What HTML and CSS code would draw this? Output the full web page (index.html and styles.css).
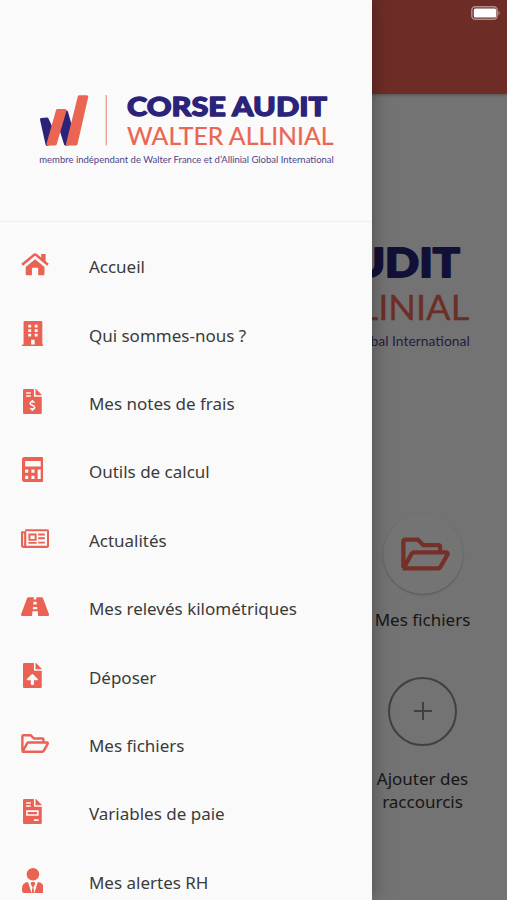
FILE: index.html
```html
<!DOCTYPE html>
<html lang="fr">
<head>
<meta charset="utf-8">
<title>Corse Audit</title>
<link rel="stylesheet" href="styles.css">
</head>
<body>
<svg class="defs" aria-hidden="true">
  <symbol id="logo" viewBox="39 94 295 73" overflow="visible">
    <g stroke-linejoin="round" stroke-width="3">
      <path fill="#2b2379" stroke="#2b2379" d="M41.500 119.500l5.500-.5 6 13-5 12.200h-1zM64.500 111l2 1 5.500 20-4 12h-2.500l-5-16z"/>
      <path fill="#ea6653" stroke="#ea6653" d="M57.500 110.500h7.500L55.200 144H48zM79.300 96.700h7.500L76 144h-8.500z"/>
    </g>
    <path d="M106.300 95v50.500" stroke="#e79d91" stroke-width="1.300"/>
    <text class="brand" x="127" y="115.500" textLength="200" lengthAdjust="spacingAndGlyphs">CORSE AUDIT</text>
    <text class="group" x="127" y="145.400" textLength="206.500" lengthAdjust="spacingAndGlyphs">WALTER ALLINIAL</text>
    <text class="tagline" x="39.300" y="163.200" textLength="294.500" lengthAdjust="spacingAndGlyphs">membre indépendant de Walter France et d’Allinial Global International</text>
  </symbol>
  <symbol id="folder" viewBox="0 0 576 512">
    <path fill="none" stroke="currentColor" stroke-width="50" stroke-linejoin="round" d="M28 420V112q0-24 24-24h148l64 64h172q24 0 24 24v56M28 420q4 4 12 4h400q14 0 22-12l82-144q12-30-12-32H152q-16 0-24 12L34 416"/>
  </symbol>
</svg>

<div class="screen">
  <main class="app">
    <header class="topbar"></header>
    <svg class="home-logo"><use href="#logo"/></svg>
    <section class="shortcuts">
      <div class="shortcut">
        <span class="disc"><svg class="disc-icon"><use href="#folder"/></svg></span>
        <span>Mes fichiers</span>
      </div>
      <div class="shortcut">
        <span class="add"><svg viewBox="0 0 18 18" width="18" height="18"><path d="M9 0v18M0 9h18" stroke="currentColor" stroke-width="2"/></svg></span>
        <span>Ajouter des raccourcis</span>
      </div>
    </section>
  </main>
  <div class="scrim"></div>
  <svg class="battery" viewBox="0 0 30 14"><rect x=".8" y=".8" width="25.400" height="12.400" rx="3.500"/><rect class="charge" x="2.800" y="2.500" width="22.400" height="9" rx="1.500"/><path class="tip" d="M27.500 4.500q2.500 2.500 0 5z"/></svg>

  <aside class="drawer">
    <div class="drawer-head"><svg class="drawer-logo"><use href="#logo"/></svg></div>
    <nav class="menu">
      <a class="item"><span class="icon"><svg viewBox="0 0 576 512"><path d="M288 150l192 158v148q0 20-20 20H352V340q0-16-16-16h-96q-16 0-16 16v136H116q-20 0-20-20V308z"/><path d="M24 262L270 58q18-14 36 0l246 204" fill="none" stroke="currentColor" stroke-width="52" stroke-linejoin="round"/><path d="M414 40h78q12 0 12 12v168l-90-72z"/></svg></span><span>Accueil</span></a>
      <a class="item"><span class="icon"><svg viewBox="0 0 448 512"><path fill-rule="evenodd" d="M56 0h336q24 0 24 24v456h20q12 0 12 12v20H0v-20q0-12 12-12h20V24Q32 0 56 0zM128 76v56h60V76zm132 0v56h60V76zM128 168v56h60v-56zm132 0v56h60v-56zM128 260v56h60v-56zm132 0v56h60v-56zM188 384v96h72v-96z"/></svg></span><span>Qui sommes-nous ?</span></a>
      <a class="item"><span class="icon"><svg viewBox="0 0 384 512"><path d="M24 0h200v136q0 24 24 24h136v328q0 24-24 24H24q-24 0-24-24V24Q0 0 24 0zM256 0q10 0 17 7l104 104q7 7 7 17H256z"/><path class="cut" d="M64 80h96M64 144h96M236 278q-20-18-46-18-42 0-42 36c0 42 90 28 90 78 0 32-24 38-46 38q-26 0-46-18M192 226v34M192 412v36"/></svg></span><span>Mes notes de frais</span></a>
      <a class="item"><span class="icon"><svg viewBox="0 0 448 512"><path fill-rule="evenodd" d="M48 0h352q48 0 48 48v416q0 48-48 48H48q-48 0-48-48V48Q0 0 48 0zM64 80v112h320V80zM64 256v64h64v-64zm128 0v64h64v-64zM64 384v64h64v-64zm128 0v64h64v-64zM320 256v192h64V256z"/></svg></span><span>Outils de calcul</span></a>
      <a class="item"><span class="icon"><svg viewBox="0 0 576 512"><path fill="none" stroke="currentColor" stroke-width="44" stroke-linejoin="round" d="M86 86h444q24 0 24 24v292q0 24-24 24H54q-32 0-32-32V128h64v266q0 32-32 32"/><path fill-rule="evenodd" d="M152 152h168v152H152zm40 40v72h88v-72zM352 152h136v40H352zM352 232h136v40H352zM352 320h136v40H352zM152 328h168v34H152z"/></svg></span><span>Actualités</span></a>
      <a class="item"><span class="icon"><svg viewBox="0 0 576 512"><path fill-rule="evenodd" d="M150 64h114l-4 48h56l-4-48h114q18 0 24 16l124 336q8 32-24 32H350l-8-96H234l-8 96H26q-32 0-24-32L126 80q6-16 24-16zM256 160l-5 56h74l-5-56zM246 264l-4 48h92l-4-48z"/></svg></span><span>Mes relevés kilométriques</span></a>
      <a class="item"><span class="icon"><svg viewBox="0 0 384 512"><path fill-rule="evenodd" d="M24 0h200v136q0 24 24 24h136v328q0 24-24 24H24q-24 0-24-24V24Q0 0 24 0zM256 0q10 0 17 7l104 104q7 7 7 17H256zM180 230L80 330q-8 18 12 22h68v80q0 16 16 16h32q16 0 16-16v-80h68q20-4 12-22L204 230q-12-10-24 0z"/></svg></span><span>Déposer</span></a>
      <a class="item"><span class="icon"><svg viewBox="0 0 576 512"><use href="#folder"/></svg></span><span>Mes fichiers</span></a>
      <a class="item"><span class="icon"><svg viewBox="0 0 384 512"><path d="M24 0h200v136q0 24 24 24h136v328q0 24-24 24H24q-24 0-24-24V24Q0 0 24 0zM256 0q10 0 17 7l104 104q7 7 7 17H256z"/><path class="cut" d="M64 80h96M64 144h96M80 248h224v80H80zM224 432h96"/></svg></span><span>Variables de paie</span></a>
      <a class="item"><span class="icon"><svg viewBox="0 0 448 512"><circle cx="224" cy="128" r="128"/><path d="M130 288l70 190 16-84-32-54q-12-36 12-52h56q24 16 12 52l-32 54 16 84 70-190q130 10 130 134v42q0 48-48 48H48q-48 0-48-48v-42Q0 298 130 288z"/><path class="thin" d="M136 290l64 210M312 290l-64 210"/></svg></span><span>Mes alertes RH</span></a>
    </nav>
  </aside>
</div>
</body>
</html>
```

FILE: styles.css
```css
* { box-sizing: border-box; }
body { margin: 0; font-family: "Noto Sans", "Open Sans", sans-serif; font-size: 17px; color: #3b3b3b; }
.defs { position: absolute; width: 0; height: 0; }
.screen { position: relative; width: 507px; height: 900px; overflow: hidden; }

.brand { font: 900 27px Lato, sans-serif; fill: #2b2379; stroke: #2b2379; stroke-width: 1.300; stroke-linejoin: round; }
.group { font: 400 24.300px Lato, sans-serif; fill: #ea6653; stroke: #ea6653; stroke-width: .2; }
.tagline { font: 400 9.200px Lato, sans-serif; fill: #4e4689; }

.app { display: flex; flex-direction: column; height: 100%; background: #fafafa; }
.topbar { height: 94px; background: #ed6353; box-shadow: 0 1px 3px rgba(0, 0, 0, .3); }
.home-logo { width: 431px; height: 107px; margin: 151px 0 0 38.500px; overflow: visible; }
.shortcuts { display: flex; flex-direction: column; align-items: flex-end; gap: 45px; margin-top: 162px; padding-right: 24.500px; color: #333; line-height: 23.500px; }
.shortcut { display: flex; flex-direction: column; align-items: center; width: 120px; text-align: center; }
.disc { display: flex; align-items: center; justify-content: center; width: 80px; height: 80px; margin-bottom: 14px; border-radius: 50%; background: #fcfcfc; box-shadow: 0 1px 2px rgba(0, 0, 0, .25); color: #ff6a55; }
.disc-icon { width: 49px; height: 44px; margin-left: 5px; }
.add { display: flex; align-items: center; justify-content: center; width: 69px; height: 69px; margin-bottom: 21px; border: 2px solid #8c8c8c; border-radius: 50%; color: #8c8c8c; }

.scrim { position: absolute; inset: 0; background: rgba(0, 0, 0, .54); }
.battery { position: absolute; top: 6px; right: 6.500px; width: 30px; height: 14px; fill: none; stroke: #b18d89; stroke-width: 1.500; }
.charge { fill: #fff; stroke: none; }
.tip { fill: #b18d89; stroke: none; }

.drawer { position: absolute; inset: 0 auto 0 0; width: 372.400px; background: #fafafa; box-shadow: 0 0 18px rgba(0, 0, 0, .35); overflow: hidden; }
.drawer-head { height: 222px; padding: 94px 0 0 39px; border-bottom: 1px solid #f0f0f0; }
.drawer-logo { display: block; width: 295px; height: 73px; overflow: visible; }
.menu { display: flex; flex-direction: column; padding: 11px 0 0 20.500px; }
.item { display: flex; align-items: center; flex: none; height: 68.400px; }
.icon { display: flex; justify-content: center; min-width: 24px; margin-bottom: 5px; color: #ea6253; }
.icon + span { margin: -1px 0 0 auto; width: 283.500px; }
.icon > svg { height: 25px; fill: currentColor; }
.cut { fill: none; stroke: #fafafa; stroke-width: 32; }
.thin { fill: none; stroke: #fafafa; stroke-width: 20; }
```
